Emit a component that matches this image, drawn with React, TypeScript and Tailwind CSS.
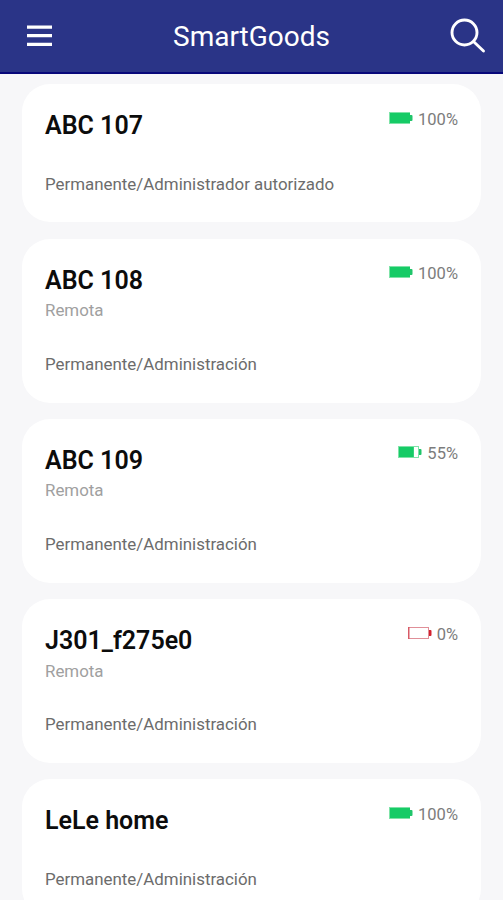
import React, { useState } from 'react';

interface Lock {
  id: number;
  name: string;
  battery: number;
  remote: boolean;
  access: string;
}

const LOCKS: Lock[] = [
  { id: 1, name: 'ABC 107', battery: 100, remote: false, access: 'Permanente/Administrador autorizado' },
  { id: 2, name: 'ABC 108', battery: 100, remote: true, access: 'Permanente/Administración' },
  { id: 3, name: 'ABC 109', battery: 55, remote: true, access: 'Permanente/Administración' },
  { id: 4, name: 'J301_f275e0', battery: 0, remote: true, access: 'Permanente/Administración' },
  { id: 5, name: 'LeLe home', battery: 100, remote: false, access: 'Permanente/Administración' },
];

const Battery: React.FC<{ level: number }> = ({ level }) => {
  const isEmpty = level === 0;
  const fill = level === 100 ? 20 : (level / 100) * 27;

  return (
    <svg width="24" height="14" viewBox="0 0 24 14" fill="none">
      <rect x="0.5" y="1.5" width="20" height="11" stroke={isEmpty ? '#e08f98' : '#7fe3a8'} />
      {isEmpty && <path d="M0.75 1v12" stroke="#d85a66" strokeWidth="1.5" />}
      {!isEmpty && <rect x="1" y="2" width={fill} height="10" fill="#16cb66" />}
      <path d="M21 4h1.5q1 0 1 1v4q0 1-1 1H21z" fill={isEmpty ? '#d3222f' : '#20c56a'} />
    </svg>
  );
};

const LockCard: React.FC<{ lock: Lock }> = ({ lock }) => (
  <div className={`bg-white rounded-[28px] px-[23px] pt-[26px] shrink-0 ${lock.remote ? 'h-[164px]' : 'h-[138px]'}`}>
    <div className="flex justify-between items-start">
      <h2 className="text-[25px] leading-[31px] font-semibold text-[#0c0c0c]">{lock.name}</h2>
      <div className="flex items-start gap-[5px]">
        <span className="pt-[0.5px]"><Battery level={lock.battery} /></span>
        <span className="pt-[0.4px] text-[16.5px] leading-[18px] text-[#7c7c7c]">{lock.battery}%</span>
      </div>
    </div>
    {lock.remote && <p className="mt-[4.4px] text-[16.9px] leading-5 text-[#a0a0a0]">Remota</p>}
    <p className={`text-[16.9px] leading-5 text-[#6c6c6c] ${lock.remote ? 'mt-[33.6px]' : 'mt-[32.6px]'}`}>{lock.access}</p>
  </div>
);

const App: React.FC = () => {
  const [locks] = useState<Lock[]>(LOCKS);

  return (
    <div className="w-full h-[900px] overflow-hidden flex flex-col bg-[#f7f7f9] font-[Roboto,sans-serif]">
      <header className="h-[74px] shrink-0 flex items-center justify-between pl-[26px] pr-[17px] bg-[#2a3487] border-b-2 border-[#07077a] text-white">
        <button aria-label="Menu" className="w-[27px]">
          <svg width="27" height="24" viewBox="0 0 27 24" fill="currentColor">
            <path d="M1 1.5h25v3.2H1zM1 10.1h25v3.2H1zM1 18.7h25v3.2H1z" />
          </svg>
        </button>
        <h1 className="pt-0.5 text-[28px] leading-9">SmartGoods</h1>
        <button aria-label="Buscar" className="w-9">
          <svg width="36" height="36" viewBox="0 0 36 36" fill="none" stroke="currentColor" strokeWidth="2.9" strokeLinecap="round">
            <circle cx="14.5" cy="14.5" r="12.5" />
            <path d="M24 24 33.5 33" />
          </svg>
        </button>
      </header>

      <main className="flex-1 min-h-0 flex flex-col gap-[16.3px] pt-[10.3px] px-[22px] overflow-hidden">
        {locks.map(lock => (
          <LockCard key={lock.id} lock={lock} />
        ))}
      </main>
    </div>
  );
};

export default App;
